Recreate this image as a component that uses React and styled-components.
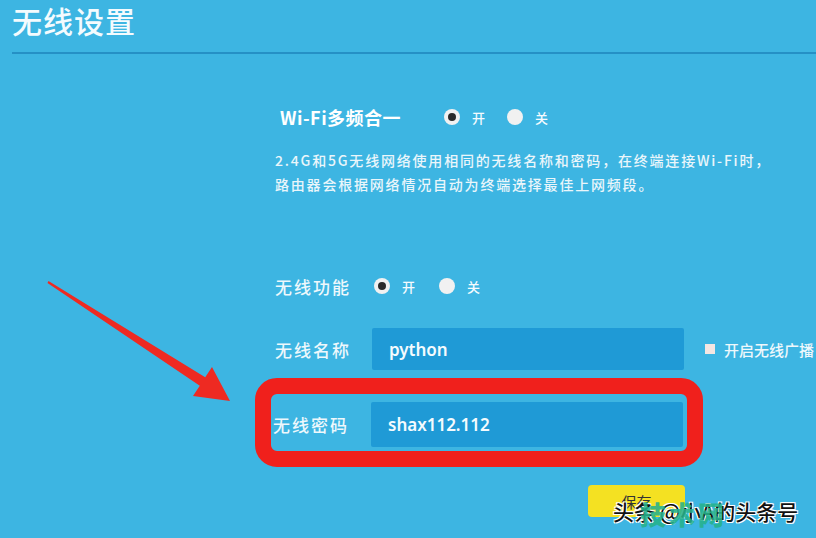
import React from "react";
import styled, { createGlobalStyle } from "styled-components";

const GlobalStyle = createGlobalStyle`
  html, body {
    margin: 0;
    padding: 0;
    width: 816px;
    height: 538px;
    overflow: hidden;
    background: #3db5e2;
    font-family: "Noto Sans CJK SC", "Noto Sans", sans-serif;
  }
`;

const Page = styled.div`
  position: relative;
  width: 816px;
  height: 538px;
  overflow: hidden;
  background: #3db5e2;
  color: #f3fafd;
`;

const Header = styled.div`
  padding: 2px 0 0 12px;
`;

const Title = styled.h1`
  margin: 0;
  font-size: 30px;
  line-height: 36px;
  font-weight: 500;
  color: #f4fbfe;
  letter-spacing: 1px;
`;

const Divider = styled.div`
  margin-top: 14px;
  height: 2px;
  background: #2590c5;
`;

const Form = styled.div`
  padding-left: 275px;
  display: flex;
  flex-direction: column;
`;

const Row = styled.div`
  display: flex;
  align-items: center;
  white-space: nowrap;
  margin-top: ${(p) => p.$top || 0}px;
  height: ${(p) => p.$h || 24}px;
`;

const MainLabel = styled.div`
  margin-left: 5px;
  width: 150px;
  font-size: 18px;
  font-weight: 700;
  color: #ffffff;
  letter-spacing: 0.5px;
`;

const Label = styled.div`
  width: ${(p) => p.$w || 97}px;
  flex-shrink: 0;
  font-size: 17px;
  font-weight: 500;
  letter-spacing: 2px;
  color: #eef8fc;
`;

const Desc = styled.p`
  margin: 19px 0 0;
  font-size: 14px;
  font-weight: 500;
  line-height: 24px;
  letter-spacing: 1.8px;
  color: #eaf6fb;
  white-space: nowrap;
`;

const RadioGroup = styled.div`
  display: flex;
  align-items: center;
  margin-left: ${(p) => p.$left || 0}px;
`;

const Radio = styled.span`
  width: 16px;
  height: 16px;
  border-radius: 50%;
  background: #f1f1f1;
  box-sizing: border-box;
  display: flex;
  align-items: center;
  justify-content: center;
  margin-left: ${(p) => p.$left || 0}px;
  &::after {
    content: "";
    width: 8px;
    height: 8px;
    border-radius: 50%;
    background: ${(p) => (p.$on ? "#2a2a2a" : "transparent")};
  }
`;

const Opt = styled.span`
  margin-left: 12px;
  font-size: 13px;
  font-weight: 500;
  color: #f5fbfe;
`;

const Input = styled.div`
  width: ${(p) => p.$w || 312}px;
  height: ${(p) => p.$h || 42}px;
  background: #1f9ad6;
  border-radius: 2px;
  display: flex;
  align-items: center;
  padding-left: 17px;
  box-sizing: border-box;
  font-family: "Noto Sans", "Open Sans", sans-serif;
  font-size: 17px;
  font-weight: 600;
  color: #f4fbfe;
`;

const Check = styled.span`
  margin-left: 21px;
  width: 10px;
  height: 10px;
  background: #f4e6e2;
  flex-shrink: 0;
`;

const CheckText = styled.span`
  margin-left: 9px;
  font-size: 15px;
  font-weight: 500;
  color: #eef8fc;
`;

const Highlight = styled.div`
  margin-top: 8px;
  margin-left: -20px;
  width: 448px;
  height: 89px;
  box-sizing: border-box;
  border: 16px solid #f0201c;
  border-radius: 22px;
  padding: 8px 3px 4px 2px;
  display: flex;
  align-items: flex-start;
`;

const Button = styled.div`
  margin-top: 18px;
  margin-left: 313px;
  width: 97px;
  height: 32px;
  background: #f4e122;
  border-radius: 4px;
  display: flex;
  align-items: center;
  justify-content: center;
  font-size: 15px;
  color: #333;
`;

const Arrow = styled.svg`
  position: absolute;
  left: 0;
  top: 0;
  pointer-events: none;
`;

const Watermark = styled.div`
  position: absolute;
  left: 613px;
  top: 496px;
  font-size: 21px;
  font-weight: 500;
  color: #111;
  white-space: nowrap;
  text-shadow: 1px 1px 0 #fff, -1px -1px 0 #fff, 1px -1px 0 #fff, -1px 1px 0 #fff;
`;

const Stamp = styled.div`
  position: absolute;
  left: 640px;
  top: 496px;
  font-size: 26px;
  line-height: 36px;
  font-weight: 900;
  color: rgba(38, 178, 140, 0.9);
  letter-spacing: 3px;
  white-space: nowrap;
`;

export default function App() {
  return (
    <Page>
      <GlobalStyle />
      <Header>
        <Title>无线设置</Title>
        <Divider />
      </Header>
      <Form>
        <Row $top={51}>
          <MainLabel>Wi-Fi多频合一</MainLabel>
          <RadioGroup $left={14}>
            <Radio $on />
            <Opt>开</Opt>
            <Radio $left={22} />
            <Opt>关</Opt>
          </RadioGroup>
        </Row>
        <Desc>
          2.4G和5G无线网络使用相同的无线名称和密码，在终端连接Wi-Fi时，
          <br />
          路由器会根据网络情况自动为终端选择最佳上网频段。
        </Desc>
        <Row $top={78}>
          <Label>无线功能</Label>
          <RadioGroup $left={2}>
            <Radio $on />
            <Opt>开</Opt>
            <Radio $left={24} />
            <Opt>关</Opt>
          </RadioGroup>
        </Row>
        <Row $top={30} $h={42}>
          <Label>无线名称</Label>
          <Input>python</Input>
          <Check />
          <CheckText>开启无线广播</CheckText>
        </Row>
        <Highlight>
          <Row $h={45}>
            <Label $w={98}>无线密码</Label>
            <Input $h={45}>shax112.112</Input>
          </Row>
        </Highlight>
        <Button>保存</Button>
      </Form>
      <Arrow width="816" height="538" viewBox="0 0 816 538">
        <polygon
          points="48.5,281 205.2,377.3 212,367 230,401 193,396 199.8,385.7 47.5,283"
          fill="#ee2a22"
        />
      </Arrow>
      <Watermark>头条 @小A的头条号</Watermark>
      <Stamp>技术网</Stamp>
    </Page>
  );
}
